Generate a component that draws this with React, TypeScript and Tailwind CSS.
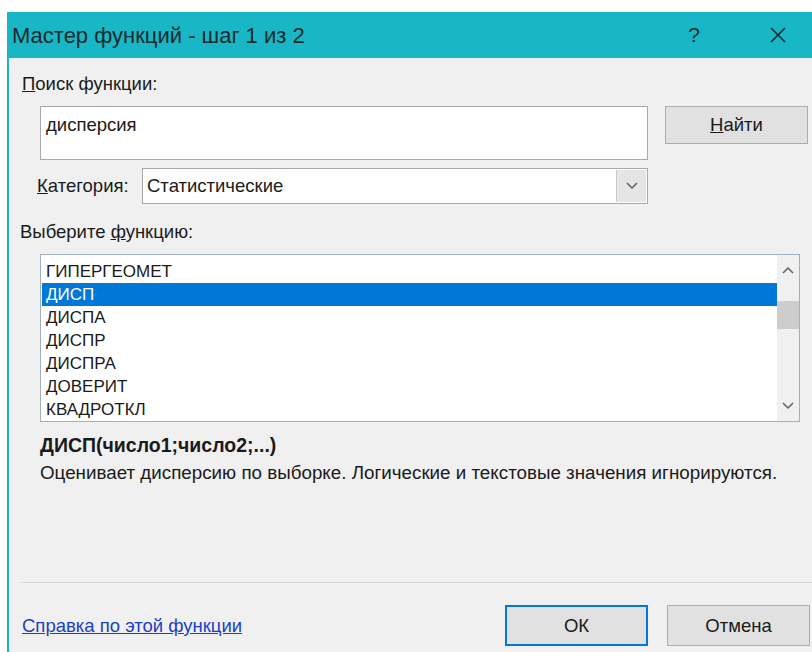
import React from 'react'

const functions = ['ГИПЕРГЕОМЕТ', 'ДИСП', 'ДИСПА', 'ДИСПР', 'ДИСПРА', 'ДОВЕРИТ', 'КВАДРОТКЛ']

const Chevron = ({ up = false }: { up?: boolean }) => (
  <svg width="12" height="8" viewBox="0 0 12 8" className="text-[#606060]">
    <path
      d={up ? 'M1 7 L6 2 L11 7' : 'M1 1 L6 6 L11 1'}
      fill="none"
      stroke="currentColor"
      strokeWidth="1.5"
    />
  </svg>
)

const App = () => {
  const selected = 'ДИСП'

  return (
    <div className="h-[652px] w-[812px] overflow-hidden bg-white pt-[12px] pl-[7px] font-['Liberation_Sans',sans-serif] text-[#1a1a1a]">
      <div className="flex h-[640px] flex-col border-l-2 border-[#19b6c5] bg-[#f0f0f0]">
        {/* title bar */}
        <div className="flex h-[46px] shrink-0 items-center bg-[#19b6c5] pl-[3px]">
          <span className="text-[22px] text-[#1b2a2e]">Мастер функций - шаг 1 из 2</span>
          <span className="ml-auto mr-[69px] text-[21px] text-[#1b2a2e]">?</span>
          <svg width="18" height="18" viewBox="0 0 18 18" className="mr-[25px]">
            <path d="M2 2 L16 16 M16 2 L2 16" stroke="#1b2a2e" strokeWidth="1.6" />
          </svg>
        </div>

        <div className="flex flex-1 flex-col text-[18.5px]">
          <div className="mt-[16px] ml-[13px] leading-[20px]">
            <span className="underline">П</span>оиск функции:
          </div>

          <div className="mt-[12px] flex items-start">
            <div className="ml-[31px] h-[54px] w-[608px] border border-[#a9a9a9] bg-white px-[5px] pt-[8px] leading-[20px]">
              дисперсия
            </div>
            <button className="ml-[17px] h-[38px] w-[143px] border border-[#adadad] bg-[#e1e1e1]">
              <span className="underline">Н</span>айти
            </button>
          </div>

          <div className="mt-[8px] flex items-center">
            <span className="ml-[28px] w-[105px]">
              <span className="underline">К</span>атегория:
            </span>
            <div className="flex h-[36px] w-[506px] items-stretch border border-[#a9a9a9] bg-white">
              <span className="flex flex-1 items-center pl-[4px]">Статистические</span>
              <span className="my-[1px] mr-[1px] flex w-[30px] items-center justify-center border-l border-[#c8c8c8] bg-[#e5e5e5]">
                <Chevron />
              </span>
            </div>
          </div>

          <div className="mt-[18px] ml-[11px] leading-[20px]">
            Выберите <span className="underline">ф</span>ункцию:
          </div>

          {/* function list */}
          <div className="mt-[12px] ml-[31px] flex h-[168px] w-[760px] border border-[#a0b0c0] bg-white">
            <div className="flex flex-1 flex-col pt-[5px] pl-[1px]">
              {functions.map((fn) => (
                <div
                  key={fn}
                  className={
                    fn === selected
                      ? 'h-[23px] bg-[#0078d7] pl-[4px] text-[17px] leading-[23px] text-white'
                      : 'h-[23px] pl-[4px] text-[17px] leading-[23px]'
                  }
                >
                  {fn}
                </div>
              ))}
            </div>
            <div className="flex w-[22px] flex-col items-center bg-[#f0f0f0]">
              <div className="flex h-[30px] items-center">
                <Chevron up />
              </div>
              <div className="mt-[16px] h-[28px] w-full bg-[#cdcdcd]" />
              <div className="mt-auto flex h-[30px] items-center">
                <Chevron />
              </div>
            </div>
          </div>

          <div className="mt-[12px] ml-[31px] text-[19.5px] font-bold leading-[22px]">
            ДИСП(число1;число2;...)
          </div>
          <div className="mt-[6px] ml-[31px] text-[18.8px] leading-[22px]">
            Оценивает дисперсию по выборке. Логические и текстовые значения игнорируются.
          </div>

          <div className="mt-auto ml-[11px] border-t border-[#dcdcdc]" />

          <div className="mt-[22px] mb-[6px] flex items-center">
            <span className="ml-[13px] text-[#1a3fc4] underline">Справка по этой функции</span>
            <button className="ml-auto h-[41px] w-[143px] border-2 border-[#0078d7] bg-[#e1e1e1]">
              ОК
            </button>
            <button className="ml-[19px] mr-[2px] h-[41px] w-[143px] border border-[#adadad] bg-[#e1e1e1]">
              Отмена
            </button>
          </div>
        </div>
      </div>
    </div>
  )
}

export default App
